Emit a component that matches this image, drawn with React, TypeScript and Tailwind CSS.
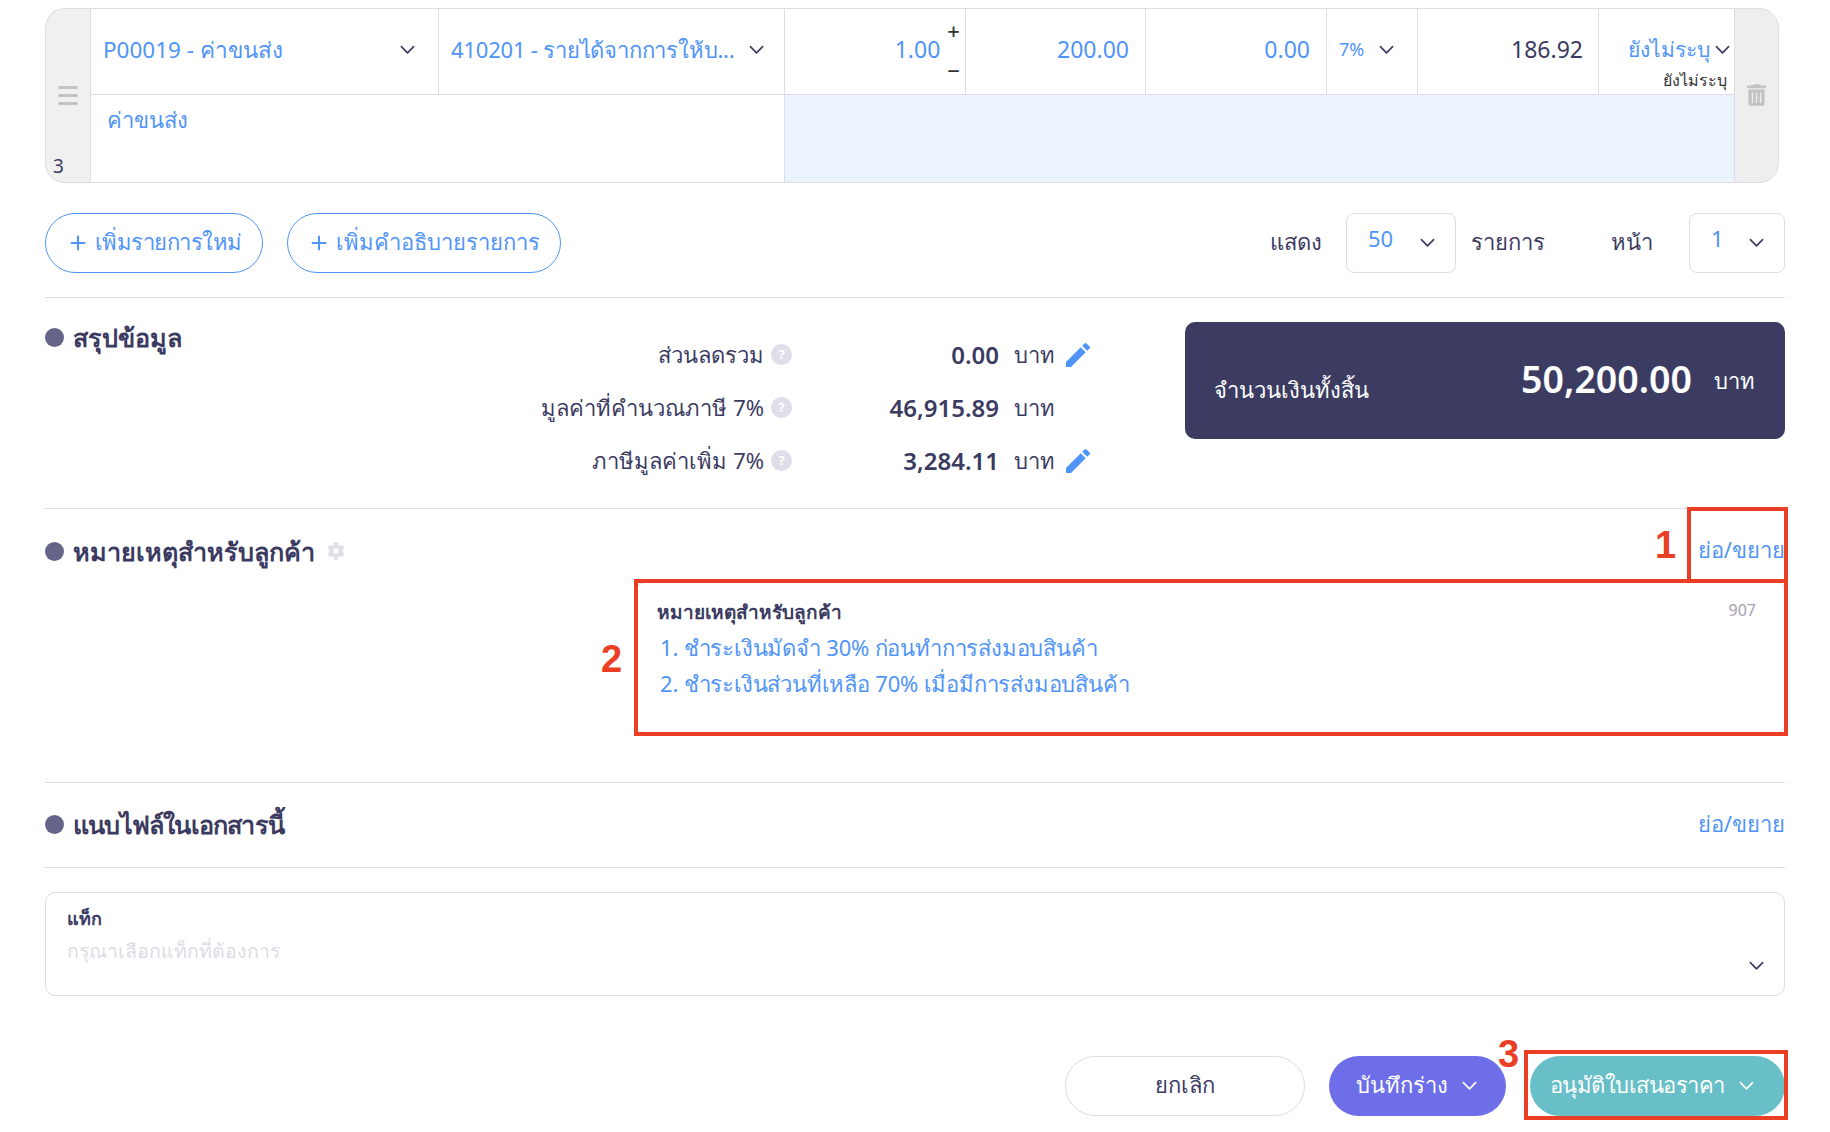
import React from 'react'
import { FaCog, FaTrashAlt } from 'react-icons/fa'
import { MdEdit } from 'react-icons/md'
import { Plus } from 'lucide-react'

const Chevron = ({ className = 'text-[#3b3b61]' }: { className?: string }) => (
  <svg viewBox="0 0 16 10" className={`w-[15px] h-[10px] shrink-0 ${className}`} fill="none" stroke="currentColor" strokeWidth="1.8" strokeLinecap="round" strokeLinejoin="round">
    <path d="M1.5 1.5 8 8l6.5-6.5" />
  </svg>
)

const Help = () => (
  <span className="w-[21px] h-[21px] rounded-full bg-[#dfdfe9] text-white text-[13px] font-bold flex items-center justify-center shrink-0">?</span>
)

const SectionTitle = ({ children, className = '' }: { children: React.ReactNode; className?: string }) => (
  <div className={`flex items-center gap-[9px] text-[25.2px] leading-none font-semibold text-[#3b3b61] ${className}`}>
    <span className="w-[19px] h-[19px] rounded-full bg-[#65658a] shrink-0" />
    {children}
  </div>
)

const SummaryRow = ({ label, value, edit }: { label: string; value: string; edit?: boolean }) => (
  <div className="flex items-center h-[53px]">
    <div className="flex items-center justify-end gap-[7px] w-[347px] text-[22px]">
      {label}
      <Help />
    </div>
    <div className="w-[207px] text-right font-semibold text-[24px]">{value}</div>
    <div className="ml-[15px] w-[40px] text-[22px]">บาท</div>
    {edit && <MdEdit className="ml-[8px] w-[32px] h-[32px] text-[#4f94f8]" />}
  </div>
)

export default function App() {
  return (
    <div className="relative w-[1830px] h-[1132px] bg-white overflow-hidden px-[45px] pt-[8px] text-[#3b3b61] font-['Noto_Sans','Liberation_Sans',sans-serif]">
      {/* item row */}
      <div className="flex w-[1734px] h-[175px]">
        <div className="relative w-[45px] rounded-l-[20px] bg-[#f0f0f0] border border-r-0 border-[#dcdce8] flex items-center justify-center">
          <div className="flex flex-col gap-[5px] w-[20px]">
            <span className="h-[3px] rounded bg-[#c4c4c4]" />
            <span className="h-[3px] rounded bg-[#c4c4c4]" />
            <span className="h-[3px] rounded bg-[#c4c4c4]" />
          </div>
          <span className="absolute left-[7px] bottom-[2px] text-[19px]">3</span>
        </div>
        <div className="flex-1 flex flex-col border border-[#dcdce8] border-r-0 text-[23px] text-[#4f94f8]">
          <div className="flex h-[86px] border-b border-[#dcdce8]">
            <div className="w-[348px] flex items-center justify-between pb-[4px] pl-[12px] pr-[23px] border-r border-[#dcdce8]">
              <span className="text-[22.5px]">P00019 - ค่าขนส่ง</span>
              <Chevron />
            </div>
            <div className="w-[346px] flex items-center justify-between pb-[4px] pl-[12px] pr-[20px] border-r border-[#dcdce8]">
              <span className="whitespace-nowrap text-[22px] tracking-[-0.2px]">410201 - รายได้จากการให้บ...</span>
              <Chevron />
            </div>
            <div className="w-[181px] flex items-center justify-end pb-[4px] pr-[5px] gap-[7px] border-r border-[#dcdce8]">
              <span>1.00</span>
              <div className="flex flex-col justify-between h-[62px] text-[#333] text-[22px] leading-none font-medium">
                <span>+</span>
                <span>−</span>
              </div>
            </div>
            <div className="w-[180px] flex items-center justify-end pb-[4px] pr-[16px] border-r border-[#dcdce8]">200.00</div>
            <div className="w-[181px] flex items-center justify-end pb-[4px] pr-[16px] border-r border-[#dcdce8]">0.00</div>
            <div className="w-[91px] flex items-center pb-[4px] pl-[12px] gap-[15px] border-r border-[#dcdce8] text-[18px]">
              <span>7%</span>
              <Chevron />
            </div>
            <div className="w-[181px] flex items-center justify-end pb-[4px] pr-[15px] border-r border-[#dcdce8] text-[#3b3b61]">186.92</div>
            <div className="flex-1 relative flex items-center justify-end pb-[4px] pr-[4px] gap-[5px]">
              <span className="whitespace-nowrap text-[21px]">ยังไม่ระบุ</span>
              <Chevron />
              <span className="absolute right-[7px] bottom-[6px] text-[16px] leading-none text-[#333]">ยังไม่ระบุ</span>
            </div>
          </div>
          <div className="flex flex-1 text-[22px]">
            <div className="w-[694px] pl-[16px] pt-[8px] border-r border-[#dcdce8]">ค่าขนส่ง</div>
            <div className="flex-1 bg-[#ebf3fd]" />
          </div>
        </div>
        <div className="w-[45px] rounded-r-[20px] bg-[#eeeeee] border border-[#dcdce8] flex items-center justify-center">
          <FaTrashAlt className="w-[19px] h-[22px] text-[#c2c2c2] -mt-[1px]" />
        </div>
      </div>

      {/* add buttons and paging */}
      <div className="flex items-center justify-between h-[60px] mt-[30px] text-[22px]">
        <div className="flex gap-[24px] text-[#4f94f8]">
          <button className="h-[60px] w-[218px] rounded-full border border-[#4f94f8] flex items-center justify-center gap-[6px] pb-[4px]">
            <Plus size={22} strokeWidth={2.2} className="mt-[4px]" />
            <span className="tracking-[-0.5px]">เพิ่มรายการใหม่</span>
          </button>
          <button className="h-[60px] w-[274px] rounded-full border border-[#4f94f8] flex items-center justify-center gap-[6px] pb-[4px]">
            <Plus size={22} strokeWidth={2.2} className="mt-[4px]" />
            เพิ่มคำอธิบายรายการ
          </button>
        </div>
        <div className="flex items-center">
          <span className="pb-[4px]">แสดง</span>
          <div className="ml-[24px] w-[110px] h-[60px] rounded-[8px] border border-[#dcdce8] flex items-center justify-between pl-[21px] pr-[20px]">
            <span className="text-[#4f94f8] -mt-[10px]">50</span>
            <Chevron />
          </div>
          <span className="ml-[15px] pb-[4px]">รายการ</span>
          <span className="ml-[66px] pb-[4px]">หน้า</span>
          <div className="ml-[36px] w-[96px] h-[60px] rounded-[8px] border border-[#dcdce8] flex items-center justify-between pl-[21px] pr-[20px]">
            <span className="text-[#4f94f8] -mt-[10px]">1</span>
            <Chevron />
          </div>
        </div>
      </div>

      {/* summary */}
      <div className="mt-[24px] h-[212px] border-y border-[#dcdce8] flex">
        <div className="w-[400px] pt-[27px]">
          <SectionTitle>สรุปข้อมูล</SectionTitle>
        </div>
        <div className="pt-[30px]">
          <SummaryRow label="ส่วนลดรวม" value="0.00" edit />
          <SummaryRow label="มูลค่าที่คำนวณภาษี 7%" value="46,915.89" />
          <SummaryRow label="ภาษีมูลค่าเพิ่ม 7%" value="3,284.11" edit />
        </div>
        <div className="ml-auto mt-[24px] w-[600px] h-[117px] rounded-[10px] bg-[#3c3c62] text-white flex items-center pl-[29px] pr-[30px]">
          <span className="text-[22px] mt-[17px]">จำนวนเงินทั้งสิ้น</span>
          <span className="ml-auto text-[37.5px] font-semibold -mt-[3px] translate-x-[1px]">50,200.00</span>
          <span className="ml-[23px] text-[22px]">บาท</span>
        </div>
      </div>

      {/* customer note */}
      <div className="h-[274px] border-b border-[#dcdce8]">
        <div className="flex items-center justify-between pt-[12px] h-[73px]">
          <div className="flex items-center gap-[12px]">
            <SectionTitle>หมายเหตุสำหรับลูกค้า</SectionTitle>
            <FaCog className="w-[18px] h-[18px] text-[#dfdfe9]" />
          </div>
          <span className="text-[22px] text-[#4f94f8] mb-[4px]">ย่อ/ขยาย</span>
        </div>
        <div className="ml-[591px] h-[151px] rounded-[8px] border border-[#dcdce8] relative px-[20px] pt-[14px]">
          <div className="text-[19px] font-semibold leading-[30px]">หมายเหตุสำหรับลูกค้า</div>
          <div className="pl-[3px] pt-[2px] text-[22px] leading-[36px] tracking-[-0.2px] text-[#4f94f8]">
            <div>1. ชำระเงินมัดจำ 30% ก่อนทำการส่งมอบสินค้า</div>
            <div>2. ชำระเงินส่วนที่เหลือ 70% เมื่อมีการส่งมอบสินค้า</div>
          </div>
          <span className="absolute right-[28px] top-[15px] text-[16px] text-[#a0a0b0]">907</span>
        </div>
      </div>

      {/* attachments */}
      <div className="h-[85px] border-b border-[#dcdce8] flex items-center justify-between">
        <SectionTitle className="tracking-[-0.8px]">แนบไฟล์ในเอกสารนี้</SectionTitle>
        <span className="text-[22px] text-[#4f94f8] mb-[4px]">ย่อ/ขยาย</span>
      </div>

      {/* tags */}
      <div className="relative mt-[24px] h-[104px] rounded-[10px] border border-[#dcdce8] pl-[21px] pt-[10px]">
        <div className="text-[18px] font-semibold leading-[30px]">แท็ก</div>
        <div className="text-[19.5px] leading-[32px] mt-[2px] text-[#dcdce6]">กรุณาเลือกแท็กที่ต้องการ</div>
        <div className="absolute right-[20px] top-[68px]">
          <Chevron />
        </div>
      </div>

      {/* footer buttons */}
      <div className="flex justify-end items-center gap-[24px] mt-[60px] text-[22px]">
        <button className="w-[240px] h-[60px] rounded-full border border-[#dcdce8] pb-[4px] -ml-[1px]">ยกเลิก</button>
        <button className="w-[177px] h-[60px] rounded-full bg-[#6d6ee8] text-white flex items-center justify-center gap-[14px] pb-[4px] pr-[3px]">
          บันทึกร่าง
          <Chevron className="text-white mt-[4px]" />
        </button>
        <button className="w-[255px] h-[60px] rounded-full bg-[#68bfc7] text-white flex items-center justify-center gap-[14px] pb-[4px] pr-[12px]">
          <span className="tracking-[-0.5px]">อนุมัติใบเสนอราคา</span>
          <Chevron className="text-white mt-[4px]" />
        </button>
      </div>

      {/* annotations */}
      <div className="absolute left-[1687px] top-[507px] w-[101px] h-[76px] border-[4px] border-[#ea3f25]" />
      <div className="absolute left-[634px] top-[579px] w-[1154px] h-[157px] border-[4px] border-[#ea3f25]" />
      <div className="absolute left-[1524px] top-[1050px] w-[264px] h-[70px] border-[4px] border-[#ea3f25]" />
      <span className="absolute left-[1655px] top-[517px] text-[38px] font-bold text-[#ea3f25] font-['Liberation_Sans']">1</span>
      <span className="absolute left-[601px] top-[631px] text-[38px] font-bold text-[#ea3f25] font-['Liberation_Sans']">2</span>
      <span className="absolute left-[1498px] top-[1026px] text-[38px] font-bold text-[#ea3f25] font-['Liberation_Sans']">3</span>
    </div>
  )
}
